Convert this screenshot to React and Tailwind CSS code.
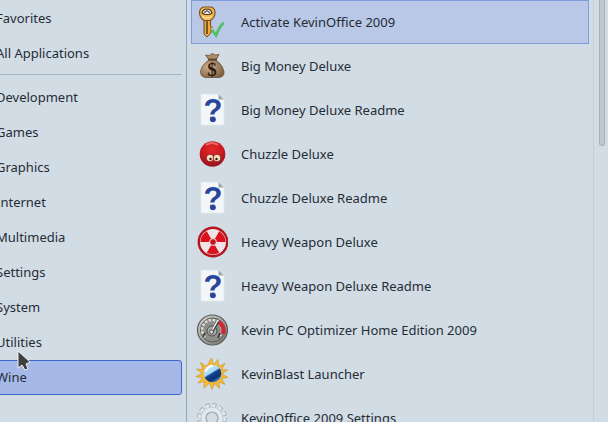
import React, { useState } from "react";

const KeyIcon = () => (
  <svg viewBox="0 0 32 32" className="size-8 shrink-0" aria-hidden="true">
    <path d="M8 13h6.500v14.500L11 31l-3-3z" fill="#e8ab46" stroke="#6f4b1e" strokeWidth="1" />
    <path d="M11 14v14" stroke="#5f4219" strokeWidth="1.600" />
    <path d="M14 20h2.500v2.500H15v1.500h1.500v2.500H14z" fill="#b77a24" />
    <path d="M3.500 7q0-5 4-6h7.500q4 1 4 6 0 4.500-4.500 7.500h-6.500q-4.500-3-4.500-7.500z" fill="#f2b651" stroke="#7d5724" strokeWidth="1.200" />
    <path d="M6 7q1-4 5-4t5 4l-2.500 1.500H8.500z" fill="#e8ecf4" stroke="#4d3a1e" strokeWidth="1.200" />
    <path d="M8 7l3-2.500L14 7" stroke="#6b5a44" strokeWidth="1.200" fill="none" />
    <path d="M6.500 10.500q4.500 3 9 0" stroke="#ffe09a" strokeWidth="1.500" fill="none" />
    <path d="M16.500 24.500l3.500 5q3-8 7-12" stroke="#4fc063" strokeWidth="2.600" fill="none" strokeLinecap="round" />
  </svg>
);

const MoneyIcon = () => (
  <svg viewBox="0 0 32 32" className="size-8 shrink-0" aria-hidden="true">
    <defs>
      <radialGradient id="sack" cx="35%" cy="40%" r="70%">
        <stop offset="0" stopColor="#cdb08f" />
        <stop offset="1" stopColor="#80603f" />
      </radialGradient>
    </defs>
    <path d="M9.500 5l4 .5L16 3.500l3.500 1.500 3.500-.5-3 5.500h-7z" fill="#ab8a68" stroke="#6b4d34" strokeWidth=".8" />
    <path d="M13 10h7q7 5 8 11.500.5 5.500-5 6H10q-5.500-.5-5.500-6Q5.500 15 13 10z" fill="url(#sack)" stroke="#6e5038" strokeWidth=".8" />
    <path d="M12 9.500h9" stroke="#5d412b" strokeWidth="1.600" />
    <text x="16" y="26" textAnchor="middle" fontFamily="Liberation Serif, serif" fontWeight="700" fontSize="19" fill="#2e1c10">$</text>
  </svg>
);

const ReadmeIcon = () => (
  <svg viewBox="0 0 32 32" className="size-8 shrink-0" aria-hidden="true">
    <path d="M5 0h18l5 5v26H5z" fill="#f3f7fa" stroke="#e2e9ee" strokeWidth=".8" />
    <path d="M22.500 0v5.500H28z" fill="#9aa9a8" />
    <text x="17" y="27" textAnchor="middle" fontFamily="Liberation Sans, sans-serif" fontWeight="700" fontSize="31" fill="#27479b">?</text>
    <circle cx="17" cy="25.500" r="2.800" fill="#27479b" />
  </svg>
);

const ChuzzleIcon = () => (
  <svg viewBox="0 0 32 32" className="size-8 shrink-0" aria-hidden="true">
    <defs>
      <radialGradient id="fur" cx="50%" cy="30%" r="65%">
        <stop offset="0" stopColor="#e02a2a" />
        <stop offset=".6" stopColor="#cc1a1f" />
        <stop offset="1" stopColor="#9d1420" />
      </radialGradient>
    </defs>
    <circle cx="16.500" cy="16" r="12.800" fill="url(#fur)" />
    <path d="M10 7q6-4 12 0" stroke="#ec6a66" strokeWidth="1.800" fill="none" />
    <circle cx="14" cy="20" r="3.800" fill="#f6dfc0" stroke="#7d0d10" strokeWidth=".8" />
    <circle cx="21" cy="20" r="3.800" fill="#f6dfc0" stroke="#7d0d10" strokeWidth=".8" />
    <circle cx="14.500" cy="21" r="1.200" fill="#301010" />
    <circle cx="20.500" cy="21" r="1.200" fill="#301010" />
  </svg>
);

const RadiationIcon = () => (
  <svg viewBox="0 0 32 32" className="size-8 shrink-0" aria-hidden="true">
    <circle cx="17" cy="16" r="14.200" fill="#efe3e7" stroke="#b3141d" strokeWidth="2.400" />
    <path d="M17 16L4.500 16A12.500 12.500 0 0 1 10.750 5.200z" fill="#d8131d" />
    <path d="M17 16L29.500 16A12.500 12.500 0 0 0 23.250 5.200z" fill="#d8131d" />
    <path d="M17 16L10.750 26.800A12.500 12.500 0 0 0 23.250 26.800z" fill="#d8131d" />
    <circle cx="17" cy="16" r="3.400" fill="#c4141d" stroke="#efe3e7" strokeWidth="1" />
  </svg>
);

const GaugeIcon = () => (
  <svg viewBox="0 0 32 32" className="size-8 shrink-0" aria-hidden="true">
    <defs>
      <linearGradient id="rim" x1="0" y1="0" x2="1" y2="1">
        <stop offset="0" stopColor="#d6d6d3" />
        <stop offset="1" stopColor="#70706e" />
      </linearGradient>
    </defs>
    <circle cx="16.500" cy="16" r="15" fill="url(#rim)" stroke="#5a5a58" strokeWidth="1.200" />
    <circle cx="16.500" cy="16" r="12" fill="#8d8d8a" stroke="#5c5c5a" strokeWidth="1" />
    <path d="M9 23A10 10 0 1 1 24 22" stroke="#dcdcd8" strokeWidth="2.500" strokeDasharray="2.500 1.500" fill="none" />
    <path d="M23 8A10.500 10.500 0 0 1 27 20" stroke="#cc2b35" strokeWidth="4.500" fill="none" />
    <circle cx="16" cy="17" r="5" fill="#a9a9a6" stroke="#4c4c4a" strokeWidth="1" />
    <path d="M9 19l-2 4M24 19l-2 5" stroke="#2f2f2f" strokeWidth="1.500" />
    <path d="M15.500 18.500L22 7" stroke="#333" strokeWidth="2.800" />
    <path d="M15 18.500L22 6" stroke="#fafafa" strokeWidth="1.500" />
    <circle cx="15.500" cy="18" r="2" fill="#dededb" stroke="#3a3a3a" strokeWidth=".8" />
  </svg>
);

const SunIcon = () => (
  <svg viewBox="0 0 32 32" className="size-8 shrink-0" aria-hidden="true">
    <defs>
      <linearGradient id="globe" x1=".2" y1="0" x2=".8" y2="1">
        <stop offset="0" stopColor="#d5effc" />
        <stop offset=".42" stopColor="#a5d7f5" />
        <stop offset=".5" stopColor="#12468f" />
        <stop offset=".75" stopColor="#0b2f79" />
        <stop offset="1" stopColor="#5aaae6" />
      </linearGradient>
    </defs>
    <path d="M15.500 0l2 7L22 1.500l.5 7L29 5.500l-3.500 6 6 .5-5.500 4 6 3.500-6.500 1 3.500 6-6-2.500.5 6.500-5-5-2.500 6-2.500-6.500L8 30l0-6.500-6 1.500 4.500-5L0 18.500l6-3L.500 11l6.500.5L4.500 4.500l6 4z" fill="#f4bb38" stroke="#cf8f20" strokeWidth=".6" />
    <circle cx="16.500" cy="15.500" r="8.800" fill="url(#globe)" />
    <path d="M10 13q1.500-4.500 6-5" stroke="#fff" strokeWidth="1.800" fill="none" strokeLinecap="round" />
  </svg>
);

const GearIcon = () => (
  <svg viewBox="0 0 32 32" className="size-8 shrink-0" aria-hidden="true">
    <circle cx="16" cy="16" r="12.500" fill="none" stroke="#a5b1bd" strokeWidth="5" strokeDasharray="4 2.540" />
    <circle cx="16" cy="16" r="12" fill="none" stroke="#e4ebf0" strokeWidth="4" strokeDasharray="3 3.280" />
    <circle cx="16" cy="16" r="8.500" fill="none" stroke="#e1e8ee" strokeWidth="5" />
    <circle cx="16" cy="16" r="11" fill="none" stroke="#b8c3cd" strokeWidth=".8" />
    <circle cx="16" cy="16" r="6" fill="none" stroke="#98a5b2" strokeWidth="1.200" />
  </svg>
);

const general = ["Favorites", "All Applications"];

const categories = [
  "Development",
  "Games",
  "Graphics",
  "Internet",
  "Multimedia",
  "Settings",
  "System",
  "Utilities",
  "Wine",
];

const apps = [
  { name: "Activate KevinOffice 2009", Icon: KeyIcon },
  { name: "Big Money Deluxe", Icon: MoneyIcon },
  { name: "Big Money Deluxe Readme", Icon: ReadmeIcon },
  { name: "Chuzzle Deluxe", Icon: ChuzzleIcon },
  { name: "Chuzzle Deluxe Readme", Icon: ReadmeIcon },
  { name: "Heavy Weapon Deluxe", Icon: RadiationIcon },
  { name: "Heavy Weapon Deluxe Readme", Icon: ReadmeIcon },
  { name: "Kevin PC Optimizer Home Edition 2009", Icon: GaugeIcon },
  { name: "KevinBlast Launcher", Icon: SunIcon },
  { name: "KevinOffice 2009 Settings", Icon: GearIcon },
];

const App = () => {
  const [category, setCategory] = useState("Wine");
  const [selected, setSelected] = useState(apps[0].name);

  const renderCategory = (name) => (
    <button
      key={name}
      type="button"
      onClick={() => setCategory(name)}
      className={
        name === category
          ? "h-[35px] shrink-0 rounded-[3px] border border-[#3d67cf] bg-[#a5b8e8] px-[3px] text-left"
          : "h-[35px] shrink-0 rounded-[3px] border border-transparent px-[3px] text-left"
      }
    >
      {name}
    </button>
  );

  return (
    <div className="flex h-screen overflow-hidden bg-[#d2dce5] font-['Noto_Sans',sans-serif] text-[13px] text-[#252c36]">
      {/* Categories */}
      <nav className="-ml-2 flex w-[195px] shrink-0 flex-col border-r border-[#97a5b4] pt-px pr-1">
        {general.map(renderCategory)}
        <hr className="mt-[3px] mb-[5px] border-[#a5b3c1]" />
        {categories.map(renderCategory)}
      </nav>

      {/* Applications */}
      <main className="flex min-w-0 flex-1 flex-col overflow-hidden px-1">
        {apps.map(({ name, Icon }) => (
          <button
            key={name}
            type="button"
            onClick={() => setSelected(name)}
            className={
              name === selected
                ? "flex h-11 shrink-0 items-center gap-[13px] border border-[#7e9bdc] bg-[#b9c8e6] px-1 text-left"
                : "flex h-11 shrink-0 items-center gap-[13px] border border-transparent px-1 text-left"
            }
          >
            <Icon />
            <span className="pt-0.5">{name}</span>
          </button>
        ))}
      </main>

      {/* Scrollbar */}
      <div className="w-[15px] shrink-0 border-l border-[#c3ced8] pl-[5px]">
        <div className="h-[146px] w-1.5 rounded-b-full border border-t-0 border-[#a9b0ba] bg-[#c1c7cf]" />
      </div>

      {/* Mouse pointer */}
      <svg viewBox="0 0 14 22" className="absolute top-[350px] left-[17px] h-[22px] w-3.5" aria-hidden="true">
        <path d="M1 1v17l4-3 3 5 3-1-2-5 4-2z" fill="#3f403c" stroke="#eef1f4" strokeWidth="1" />
      </svg>
    </div>
  );
};

export default App;
